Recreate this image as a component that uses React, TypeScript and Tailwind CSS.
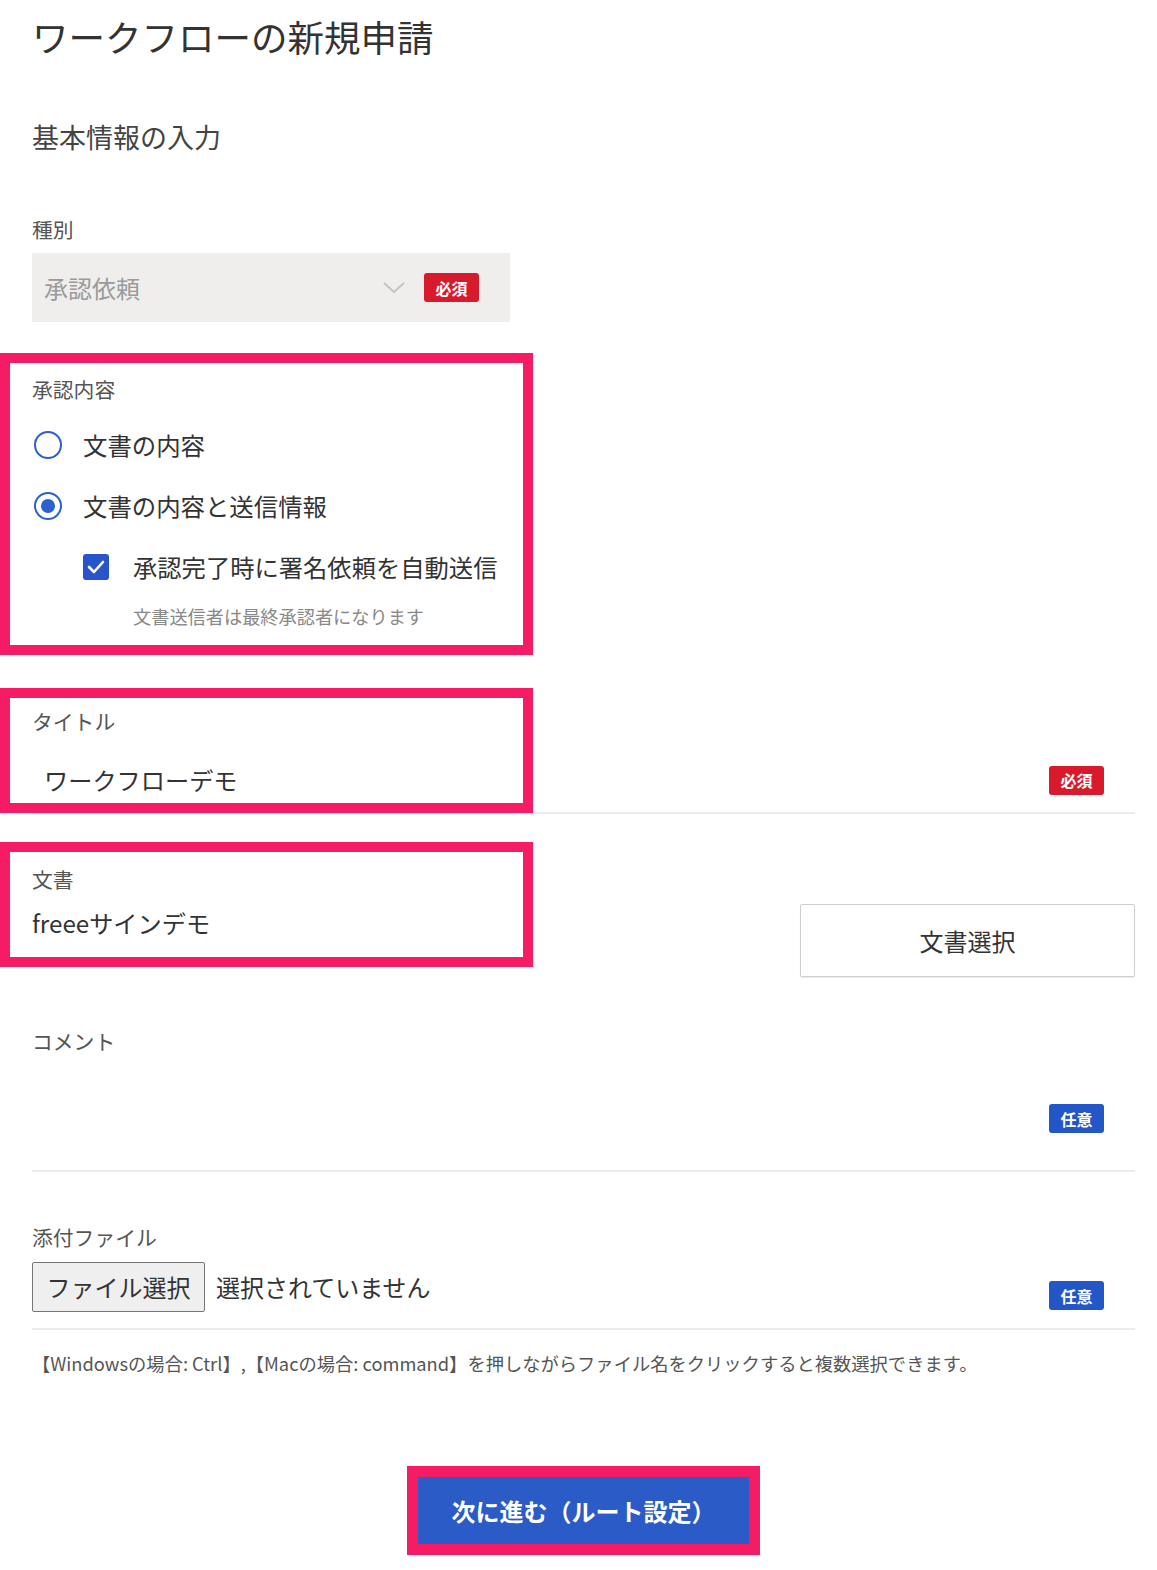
import React from "react";

const Badge: React.FC<{ kind: "required" | "optional" }> = ({ kind }) => (
  <span
    className={`inline-flex h-[29px] w-[55px] items-center justify-center rounded-[3px] text-[16px] font-bold leading-none text-white ${
      kind === "required" ? "bg-[#d71a2c]" : "bg-[#2356c7]"
    }`}
  >
    {kind === "required" ? "必須" : "任意"}
  </span>
);

const Label: React.FC<{ children: React.ReactNode; className?: string }> = ({ children, className = "" }) => (
  <div className={`flex h-[28px] items-center text-[20.8px] text-[#555] ${className}`}>{children}</div>
);

const Radio: React.FC<{ checked?: boolean; label: string; className?: string }> = ({ checked, label, className = "" }) => (
  <label className={`flex h-[40px] items-center ${className}`}>
    <span className="ml-[2px] flex h-[28px] w-[28px] items-center justify-center rounded-full border-2 border-[#2c5fd0] bg-white">
      {checked && <span className="h-[14px] w-[14px] rounded-full bg-[#2c5fd0]" />}
    </span>
    <span className="ml-[21px] text-[24.4px] text-[#333]">{label}</span>
  </label>
);

const Divider: React.FC<{ className?: string }> = ({ className = "" }) => (
  <div className={`h-[2px] bg-[#ebebeb] ${className}`} />
);

// annotation frames drawn over the form
const Frame: React.FC<{ className: string }> = ({ className }) => (
  <div className={`pointer-events-none absolute left-0 w-[533px] border-[10px] border-[#f61b65] ${className}`} />
);

const App: React.FC = () => {
  return (
    <div
      className="relative w-[1157px] bg-white pb-[16px] pl-[32px] pr-[22px]"
      style={{ fontFamily: '"Noto Sans CJK JP", "Noto Sans", sans-serif' }}
    >
      <h1 className="flex h-[74px] items-center text-[36.5px] font-normal text-[#333]">ワークフローの新規申請</h1>
      <h2 className="mt-[36px] flex h-[54px] items-center text-[27px] font-normal text-[#444]">基本情報の入力</h2>

      {/* 種別 */}
      <Label className="mt-[52px]">種別</Label>
      <div className="mt-[9px] flex h-[69px] w-[478px] items-center bg-[#efeeed] pl-[12px] pr-[31px]">
        <span className="flex-1 text-[24px] text-[#9a9a9a]">承認依頼</span>
        <svg width="22" height="12" viewBox="0 0 22 12" className="mr-[19px]">
          <polyline points="1,1 11,10 21,1" fill="none" stroke="#c4c4c4" strokeWidth="2" />
        </svg>
        <Badge kind="required" />
      </div>

      {/* 承認内容 */}
      <Label className="mt-[54px]">承認内容</Label>
      <Radio label="文書の内容" className="mt-[21px]" />
      <Radio label="文書の内容と送信情報" checked className="mt-[21px]" />
      <label className="mt-[21px] flex h-[40px] items-center pl-[51px]">
        <span className="flex h-[26px] w-[26px] items-center justify-center rounded-[3px] bg-[#2755c9]">
          <svg width="18" height="14" viewBox="0 0 18 14">
            <polyline points="2,7 7,12 16,2" fill="none" stroke="#fff" strokeWidth="2.6" strokeLinecap="round" strokeLinejoin="round" />
          </svg>
        </span>
        <span className="ml-[24px] text-[24.3px] text-[#333]">承認完了時に署名依頼を自動送信</span>
      </label>
      <div className="mt-[18px] flex h-[24px] items-center pl-[101px] text-[18.2px] text-[#888]">文書送信者は最終承認者になります</div>

      {/* タイトル */}
      <Label className="mt-[79px]">タイトル</Label>
      <div className="mt-[24px] flex h-[40px] items-center justify-between pl-[12px] pr-[31px]">
        <span className="text-[24.2px] text-[#333]">ワークフローデモ</span>
        <Badge kind="required" />
      </div>
      <Divider className="mt-[12px]" />

      {/* 文書 */}
      <div className="mt-[52px] flex items-start justify-between">
        <div>
          <Label>文書</Label>
          <div className="mt-[11px] flex h-[36px] items-center text-[24.2px] text-[#333]">freeeサインデモ</div>
        </div>
        <button className="mt-[38px] flex h-[73px] w-[335px] items-center justify-center rounded-[2px] border border-[#cfcfcf] bg-white text-[24px] text-[#333] shadow-[0_1px_1px_rgba(0,0,0,0.08)]">
          文書選択
        </button>
      </div>

      {/* コメント */}
      <Label className="mt-[51px]">コメント</Label>
      <div className="mt-[48px] flex justify-end pr-[31px]">
        <Badge kind="optional" />
      </div>
      <Divider className="mt-[37px]" />

      {/* 添付ファイル */}
      <Label className="mt-[52px]">添付ファイル</Label>
      <div className="mt-[10px] flex items-end justify-between pr-[31px]">
        <div className="flex items-center">
          <button className="flex h-[50px] w-[173px] items-center justify-center rounded-[2px] border border-[#767676] bg-[#efefef] text-[24px] text-[#333]">
            ファイル選択
          </button>
          <span className="ml-[11px] text-[24px] text-[#333]">選択されていません</span>
        </div>
        <span className="mb-[2px]">
          <Badge kind="optional" />
        </span>
      </div>
      <Divider className="mt-[16px]" />
      <div className="mt-[22px] flex h-[24px] items-center whitespace-nowrap text-[18.3px] text-[#555]">
        【Windowsの場合: Ctrl】,【Macの場合: command】を押しながらファイル名をクリックすると複数選択できます。
      </div>

      {/* 次に進む */}
      <div className="mt-[90px] flex justify-center">
        <div className="border-[11px] border-[#f61b65]">
          <button className="flex h-[67px] w-[331px] items-center justify-center bg-[#2a5bc6] text-[24px] font-bold text-white">
            次に進む（ルート設定）
          </button>
        </div>
      </div>

      <Frame className="top-[353px] h-[302px]" />
      <Frame className="top-[688px] h-[125px]" />
      <Frame className="top-[842px] h-[125px]" />
    </div>
  );
};

export default App;
